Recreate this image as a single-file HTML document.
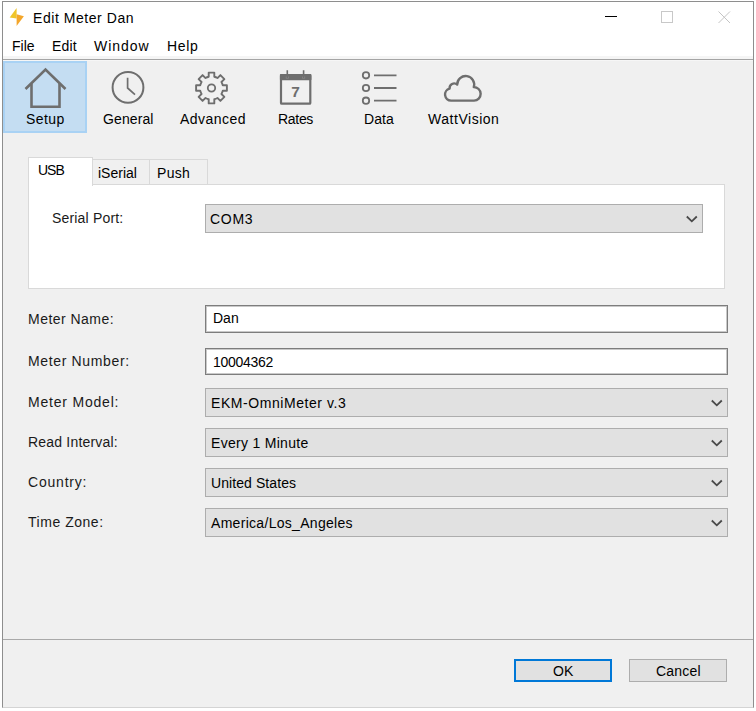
<!DOCTYPE html>
<html><head><meta charset="utf-8">
<style>
*{box-sizing:border-box;margin:0;padding:0}
html,body{width:756px;height:711px;overflow:hidden;background:#fff}
body{position:relative;font-family:"Liberation Sans",sans-serif;font-size:14px;color:#000}
.a{position:absolute;white-space:pre;line-height:16px}
#win{position:absolute;left:2px;top:1px;width:752px;height:707px;border:1px solid #8e8e8e;border-bottom-color:#d4d4d4;background:#fff}
#content{position:absolute;left:3px;top:60px;width:750px;height:647px;background:#f0f0f0}
#menuline{position:absolute;left:3px;top:59px;width:750px;height:1px;background:#a5a5a5}
#setupbtn{position:absolute;left:3px;top:61px;width:84px;height:72px;background:#c4ddf2;border:2px solid #a9d2f4}
.lbl{color:#1a1a1a}
.combo{position:absolute;background:#e1e1e1;border:1px solid #adadad}
.inp{position:absolute;background:#fff;border:1px solid #7d7d7d;box-shadow:inset 0 0 0 1px #c9c9c9}
.chev{position:absolute;width:14px;height:8px}
.tab{position:absolute;background:#f0f0f0;border:1px solid #d9d9d9}
#panel{position:absolute;left:28px;top:184px;width:697px;height:105px;background:#fff;border:1px solid #d9d9d9}
#sep{position:absolute;left:3px;top:639px;width:750px;height:1px;background:#a9a9a9}
.btn{position:absolute;background:#e1e1e1;border:1px solid #adadad}
</style></head><body>
<div id="win"></div>
<div id="content"></div>
<div class="a" style="left:3px;top:56px;width:750px;height:3px;background:#f5f5f5"></div>
<div id="menuline"></div>
<div class="a" style="left:3px;top:60px;width:750px;height:1px;background:#f6f6f6"></div>

<!-- title bar -->
<svg class="a" style="left:6px;top:4px" width="26" height="26" viewBox="0 0 26 26">
  <polygon points="10.6,4 3.7,13.4 10.6,14.4" fill="#efc52a"/>
  <polygon points="10.6,10.3 17.9,12.3 10.6,22" fill="#f4a62a"/>
</svg>
<div class="a" style="left:33px;top:10px;letter-spacing:0.55px">Edit Meter Dan</div>
<div class="a" style="left:605px;top:16px;width:12px;height:1px;background:#000"></div>
<div class="a" style="left:661px;top:11px;width:12px;height:12px;border:1px solid #c8c8c8"></div>
<svg class="a" style="left:717px;top:11px" width="15" height="13" viewBox="0 0 15 13">
  <path d="M1.5,0.5 L13,12 M13,0.5 L1.5,12" stroke="#c4c4c4" stroke-width="1" fill="none"/>
</svg>

<!-- menu -->
<div class="a" style="left:12px;top:38px">File</div>
<div class="a" style="left:52px;top:38px;letter-spacing:0.2px">Edit</div>
<div class="a" style="left:94px;top:38px;letter-spacing:0.95px">Window</div>
<div class="a" style="left:167px;top:38px;letter-spacing:0.7px">Help</div>

<!-- toolbar -->
<div id="setupbtn"></div>
<svg class="a" style="left:20px;top:64px" width="52" height="48" viewBox="0 0 52 48">
  <path d="M5.5,25 L25.5,5.5 L45.5,25" stroke="#6e6e6e" stroke-width="2.6" fill="none"/>
  <path d="M11.5,19.5 L11.5,42.7 L39.5,42.7 L39.5,19.5" stroke="#6e6e6e" stroke-width="2.6" fill="none"/>
</svg>
<div class="a" style="left:26px;top:111px;letter-spacing:0.4px">Setup</div>

<svg class="a" style="left:108px;top:68px" width="40" height="40" viewBox="0 0 40 40">
  <circle cx="20" cy="19.4" r="15.4" stroke="#6e6e6e" stroke-width="2" fill="none"/>
  <path d="M19.6,9.8 L19.6,20 L27,26.6" stroke="#6e6e6e" stroke-width="1.7" fill="none"/>
</svg>
<div class="a" style="left:103px;top:111px;letter-spacing:0.1px">General</div>

<svg class="a" style="left:190px;top:67px" width="42" height="42" viewBox="0 0 42 42">
  <g transform="translate(0.5,0)"><path d="M18.20,9.74 L18.20,5.60 L23.80,5.60 L23.80,9.74 A11.60,11.60 0 0 1 26.98,11.06 L29.91,8.13 L33.87,12.09 L30.94,15.02 A11.60,11.60 0 0 1 32.26,18.20 L36.40,18.20 L36.40,23.80 L32.26,23.80 A11.60,11.60 0 0 1 30.94,26.98 L33.87,29.91 L29.91,33.87 L26.98,30.94 A11.60,11.60 0 0 1 23.80,32.26 L23.80,36.40 L18.20,36.40 L18.20,32.26 A11.60,11.60 0 0 1 15.02,30.94 L12.09,33.87 L8.13,29.91 L11.06,26.98 A11.60,11.60 0 0 1 9.74,23.80 L5.60,23.80 L5.60,18.20 L9.74,18.20 A11.60,11.60 0 0 1 11.06,15.02 L8.13,12.09 L12.09,8.13 L15.02,11.06 A11.60,11.60 0 0 1 18.20,9.74 Z" stroke="#6e6e6e" stroke-width="1.9" fill="none" stroke-linejoin="round"/>
  <circle cx="21" cy="21" r="3.7" stroke="#6e6e6e" stroke-width="1.8" fill="none"/></g>
</svg>
<div class="a" style="left:180px;top:111px;letter-spacing:0.48px">Advanced</div>

<svg class="a" style="left:276px;top:66px" width="40" height="42" viewBox="0 0 40 42">
  <rect x="5" y="9" width="29.3" height="28.7" rx="0.8" fill="none" stroke="#6e6e6e" stroke-width="2.2"/>
  <rect x="3.9" y="7.9" width="31.5" height="6.3" rx="0.8" fill="#6e6e6e"/>
  <path d="M11.3,10.5 L11.3,12.5 M27.6,10.5 L27.6,12.5" stroke="#8a8a8a" stroke-width="3"/>
  <path d="M11.3,4.2 L11.3,12 M27.6,4.2 L27.6,12" stroke="#6e6e6e" stroke-width="1.6"/>
  <text x="19.5" y="31.2" font-family="Liberation Sans" font-weight="bold" font-size="15.5" fill="#6e6e6e" text-anchor="middle">7</text>
</svg>
<div class="a" style="left:278px;top:111px;letter-spacing:-0.3px">Rates</div>

<svg class="a" style="left:358px;top:68px" width="44" height="40" viewBox="0 0 44 40">
  <circle cx="8" cy="7.3" r="3.2" stroke="#6e6e6e" stroke-width="1.8" fill="none"/>
  <circle cx="8" cy="20" r="3.2" stroke="#6e6e6e" stroke-width="1.8" fill="none"/>
  <circle cx="8" cy="32.7" r="3.2" stroke="#6e6e6e" stroke-width="1.8" fill="none"/>
  <path d="M16,7.3 L38.5,7.3 M16,20 L38.5,20 M16,32.7 L38.5,32.7" stroke="#6e6e6e" stroke-width="1.8"/>
</svg>
<div class="a" style="left:364px;top:111px;letter-spacing:0.1px">Data</div>

<svg class="a" style="left:440px;top:70px" width="46" height="36" viewBox="0 0 46 36">
  <path d="M11,30.6 A6.1,6.1 0 0 1 9.6,18.6 A4.6,4.6 0 0 1 17.2,14.6 A8.5,8.5 0 1 1 33.8,17.1 A6.7,6.7 0 1 1 34,30.6 Z" stroke="#6e6e6e" stroke-width="2.4" fill="none" stroke-linejoin="round"/>
</svg>
<div class="a" style="left:428px;top:111px;letter-spacing:0.53px">WattVision</div>

<!-- tabs -->
<div class="tab" style="left:92px;top:159px;width:58px;height:26px"></div>
<div class="tab" style="left:149px;top:159px;width:59px;height:26px"></div>
<div id="panel"></div>
<div class="a" style="left:28px;top:157px;width:65px;height:29px;background:#fff;border:1px solid #d9d9d9;border-bottom:none"></div>
<div class="a" style="left:38px;top:162px;letter-spacing:-1px">USB</div>
<div class="a" style="left:98px;top:165px">iSerial</div>
<div class="a" style="left:157px;top:165px;letter-spacing:0.3px">Push</div>

<div class="a lbl" style="left:52px;top:210px;letter-spacing:0.18px">Serial Port:</div>
<div class="combo" style="left:205px;top:204px;width:498px;height:29px"></div>
<div class="a" style="left:210px;top:211px;letter-spacing:0.7px">COM3</div>

<!-- form -->
<div class="a lbl" style="left:28px;top:311px;letter-spacing:0.47px">Meter Name:</div>
<div class="inp" style="left:205px;top:305px;width:523px;height:28px"></div>
<div class="a" style="left:213px;top:310px">Dan</div>

<div class="a lbl" style="left:28px;top:353px;letter-spacing:0.65px">Meter Number:</div>
<div class="inp" style="left:205px;top:348px;width:523px;height:27px"></div>
<div class="a" style="left:213px;top:354px;letter-spacing:-0.3px">10004362</div>

<div class="a lbl" style="left:28px;top:394px;letter-spacing:0.8px">Meter Model:</div>
<div class="combo" style="left:205px;top:388px;width:523px;height:29px"></div>
<div class="a" style="left:211px;top:395px;letter-spacing:0.56px">EKM-OmniMeter v.3</div>

<div class="a lbl" style="left:28px;top:434px;letter-spacing:0.2px">Read Interval:</div>
<div class="combo" style="left:205px;top:428px;width:523px;height:29px"></div>
<div class="a" style="left:211px;top:435px;letter-spacing:0.3px">Every 1 Minute</div>

<div class="a lbl" style="left:28px;top:474px;letter-spacing:0.8px">Country:</div>
<div class="combo" style="left:205px;top:468px;width:523px;height:29px"></div>
<div class="a" style="left:211px;top:475px;letter-spacing:0.08px">United States</div>

<div class="a lbl" style="left:28px;top:514px;letter-spacing:0.53px">Time Zone:</div>
<div class="combo" style="left:205px;top:508px;width:523px;height:29px"></div>
<div class="a" style="left:211px;top:515px;letter-spacing:0.3px">America/Los_Angeles</div>

<!-- chevrons -->
<svg class="chev" style="left:685px;top:215px" viewBox="0 0 14 8"><path d="M1.8,1.5 L6.8,6.3 L11.8,1.5" stroke="#4a4a4a" stroke-width="1.8" fill="none"/></svg>
<svg class="chev" style="left:710px;top:399px" viewBox="0 0 14 8"><path d="M1.8,1.5 L6.8,6.3 L11.8,1.5" stroke="#4a4a4a" stroke-width="1.8" fill="none"/></svg>
<svg class="chev" style="left:710px;top:439px" viewBox="0 0 14 8"><path d="M1.8,1.5 L6.8,6.3 L11.8,1.5" stroke="#4a4a4a" stroke-width="1.8" fill="none"/></svg>
<svg class="chev" style="left:710px;top:479px" viewBox="0 0 14 8"><path d="M1.8,1.5 L6.8,6.3 L11.8,1.5" stroke="#4a4a4a" stroke-width="1.8" fill="none"/></svg>
<svg class="chev" style="left:710px;top:519px" viewBox="0 0 14 8"><path d="M1.8,1.5 L6.8,6.3 L11.8,1.5" stroke="#4a4a4a" stroke-width="1.8" fill="none"/></svg>

<!-- bottom -->
<div id="sep"></div>
<div class="btn" style="left:514px;top:659px;width:98px;height:23px;border:2px solid #0078d7"></div>
<div class="a" style="left:553px;top:663px">OK</div>
<div class="btn" style="left:629px;top:659px;width:98px;height:23px"></div>
<div class="a" style="left:656px;top:663px;letter-spacing:0.2px">Cancel</div>
</body></html>
